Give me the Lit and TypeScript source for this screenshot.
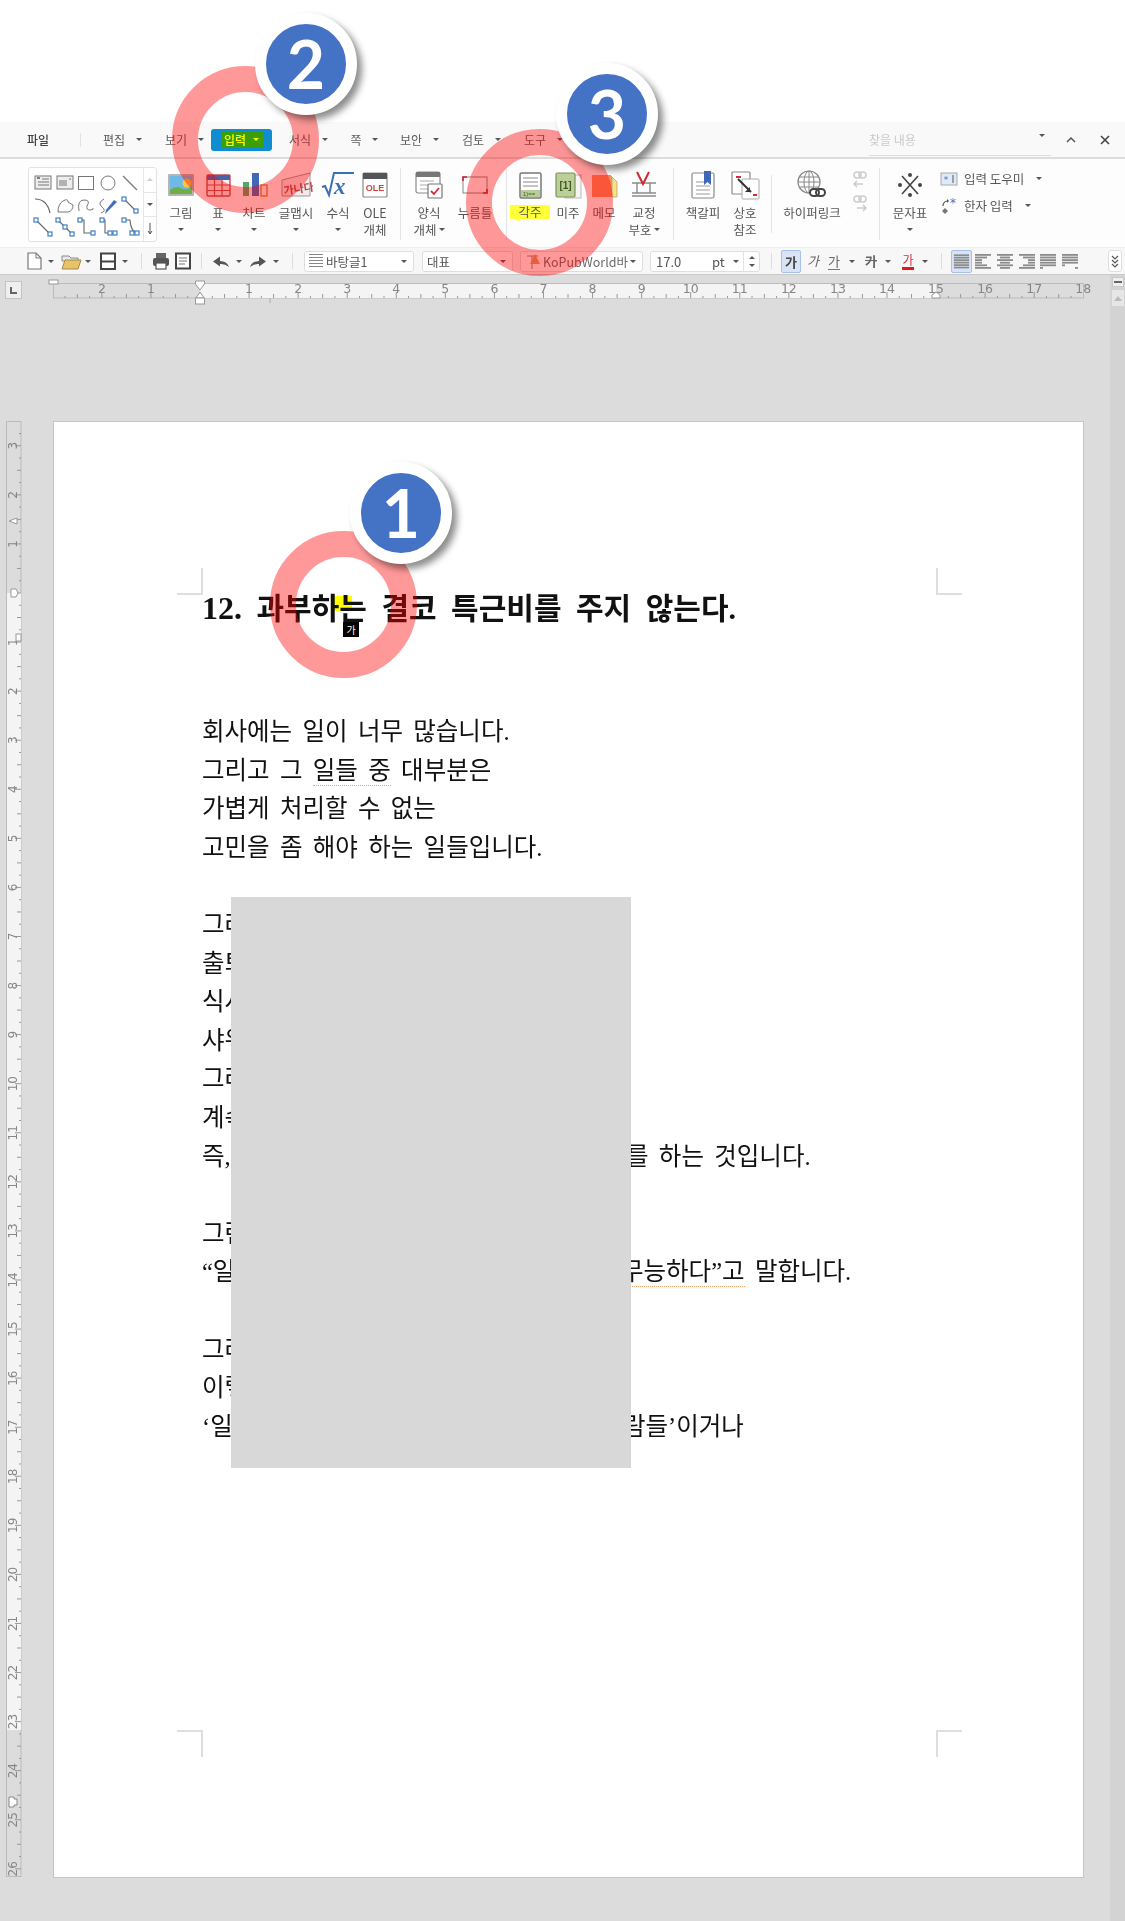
import { LitElement, html, css, svg } from "lit";
import { customElement } from "lit/decorators.js";

type Item = { x: number; w: number; c: unknown };
const place = (items: Item[], start = 0) => {
  let r = start;
  return items.map((it) => {
    const ml = it.x - r;
    r = it.x + it.w;
    return html`<div class="cell" style="margin-left:${ml}px;width:${it.w}px">${it.c}</div>`;
  });
};
const caret = html`<i class="caret"></i>`;
const ico = (w: number, h: number, body: unknown) =>
  html`<svg width=${w} height=${h} viewBox="0 0 ${w} ${h}" fill="none">${body}</svg>`;

/* ---------- ribbon icons ---------- */
const icons: Record<string, unknown> = {
  pic: ico(32, 30, svg`<rect x="3" y="4" width="26" height="22" rx="1" fill="#b5b5b5"/><rect x="5" y="6" width="22" height="18" fill="#6fb9e6"/><path d="M5 20q6-5 11-2t11-1v7H5z" fill="#6fae46"/><circle cx="22" cy="13" r="4.5" fill="#f4c842"/>`),
  table: ico(32, 30, svg`<rect x="5" y="5" width="23" height="21" rx="1" stroke="#c0504d" stroke-width="1.4" fill="#fbeeee"/><rect x="5" y="5" width="23" height="5" fill="#4a63a8"/><path d="M5 15h23M5 20.500h23M12.500 10v16M20 10v16" stroke="#c0504d" stroke-width="1.2"/>`),
  chart: ico(32, 30, svg`<rect x="5" y="12" width="6" height="14" fill="#56a56b"/><rect x="14" y="3" width="7" height="23" fill="#3f68b5"/><rect x="23" y="15" width="6" height="11" fill="none" stroke="#d8883a" stroke-width="1.4"/>`),
  art: ico(34, 30, svg`<path d="M3 10L31 3v23H3z" fill="#f3e9e9" stroke="#999" stroke-width="1"/><text x="4" y="23" font-size="11" font-weight="700" fill="#b3484a" transform="rotate(-8 17 15)" font-family="'Noto Sans CJK KR',sans-serif">가나다</text>`),
  math: ico(34, 30, svg`<path d="M1 17l3-1 4 9 5-22h20" stroke="#3b6fb8" stroke-width="2"/><text x="13" y="24" font-size="23" font-style="italic" font-weight="700" fill="#3b6fb8" font-family="'Liberation Serif',serif">x</text>`),
  ole: ico(30, 30, svg`<rect x="3" y="3" width="24" height="24" rx="1" fill="#fff" stroke="#8a8a8a" stroke-width="1.2"/><rect x="3" y="3" width="24" height="6" fill="#555"/><text x="15" y="21" text-anchor="middle" font-size="9" font-weight="700" fill="#d9423f" font-family="'Liberation Sans',sans-serif">OLE</text>`),
  form: ico(32, 30, svg`<rect x="3" y="2" width="24" height="21" rx="2" fill="#fff" stroke="#8a8a8a" stroke-width="1.2"/><rect x="3" y="2" width="24" height="5" fill="#777"/><path d="M7 11h14M7 15h10M7 19h8" stroke="#aaa"/><rect x="15" y="14" width="14" height="14" rx="1" fill="#fff" stroke="#777" stroke-width="1.2"/><path d="M18 21l3 3 5-6" stroke="#d22f3a" stroke-width="1.8"/>`),
  field: ico(32, 30, svg`<rect x="4" y="7" width="24" height="16" stroke="#999" stroke-width="1.2"/><path d="M4 11V7h4M24 23h4v-4" stroke="#c8222a" stroke-width="1.6"/>`),
  foot: ico(30, 30, svg`<rect x="5" y="3" width="21" height="25" rx="1.500" fill="#fff" stroke="#777" stroke-width="1.500"/><path d="M8 8h15M8 12h15M8 16h15" stroke="#888"/><rect x="6" y="20" width="19" height="7" fill="#b7cc96"/><text x="8" y="26" font-size="6" fill="#44602a" font-family="'Liberation Sans',sans-serif">1)==</text>`),
  end: ico(30, 30, svg`<rect x="12" y="5" width="16" height="23" fill="#f4f4f4" stroke="#bbb"/><rect x="3" y="3" width="19" height="24" rx="1.500" fill="#bccf9b" stroke="#789455" stroke-width="1.200"/><text x="12.500" y="19" text-anchor="middle" font-size="10" font-weight="700" fill="#3e5b22" font-family="'Liberation Sans',sans-serif">[1]</text>`),
  memo: ico(30, 30, svg`<path d="M3 5h18l7 7v15H3z" fill="#f68f61"/><path d="M21 5l7 7v15h-5V8z" fill="#f6e08c" stroke="#bfa55a" stroke-width=".8"/>`),
  proof: ico(32, 30, svg`<path d="M4 13h24M4 26h24M4 23h24M9 13v10M22 13v10" stroke="#8a8a8a" stroke-width="1.400"/><path d="M9 2l6 12 6-12" stroke="#d0272f" stroke-width="2"/>`),
  book: ico(30, 30, svg`<rect x="4" y="3" width="22" height="25" rx="1.500" fill="#fff" stroke="#8a8a8a" stroke-width="1.200"/><path d="M8 12h10M8 16h14M8 20h14M8 24h14" stroke="#999"/><path d="M16 1h7v14l-3.500-3-3.500 3z" fill="#3f68b5"/>`),
  xref: ico(32, 30, svg`<rect x="3" y="2" width="18" height="22" rx="1" fill="#fff" stroke="#8a8a8a" stroke-width="1.200"/><rect x="13" y="9" width="17" height="20" rx="1" fill="#fff" stroke="#aaa" stroke-width="1"/><path d="M7 7h5M24 25h4" stroke="#d22f3a" stroke-width="2"/><path d="M9 9l13 13" stroke="#333" stroke-width="2"/><path d="M21 17v5h-5z" fill="#333"/>`),
  link: ico(34, 32, svg`<circle cx="14" cy="13" r="11" stroke="#888" stroke-width="1.200"/><ellipse cx="14" cy="13" rx="5" ry="11" stroke="#888"/><path d="M14 2v22M4 8h20M3 13h22M4 18h20" stroke="#888"/><rect x="15" y="20" width="9" height="7" rx="3.500" stroke="#444" stroke-width="2" fill="#fff"/><rect x="21" y="20" width="9" height="7" rx="3.500" stroke="#444" stroke-width="2"/>`),
  sym: ico(30, 30, svg`<path d="M7 6l16 18M23 6L7 24" stroke="#444" stroke-width="1.600"/><circle cx="15" cy="5" r="2" fill="#444"/><circle cx="15" cy="25" r="2" fill="#444"/><circle cx="5" cy="15" r="2" fill="#444"/><circle cx="25" cy="15" r="2" fill="#444"/>`),
};

type Btn = { x: number; w: number; i?: string; a?: string; b?: string; cl?: boolean; cb?: boolean; hy?: boolean };
const ribbon: Btn[] = [
  { x: 161, w: 40, i: "pic", a: "그림", cl: true },
  { x: 200, w: 36, i: "table", a: "표", cl: true },
  { x: 236, w: 36, i: "chart", a: "차트", cl: true },
  { x: 272, w: 48, i: "art", a: "글맵시", cl: true },
  { x: 320, w: 36, i: "math", a: "수식", cl: true },
  { x: 356, w: 38, i: "ole", a: "OLE", b: "개체" },
  { x: 406, w: 46, i: "form", a: "양식", b: "개체", cb: true },
  { x: 452, w: 46, i: "field", a: "누름틀" },
  { x: 514, w: 32, i: "foot", a: "각주", hy: true },
  { x: 546, w: 44, i: "end", a: "미주" },
  { x: 590, w: 28, i: "memo", a: "메모" },
  { x: 618, w: 52, i: "proof", a: "교정", b: "부호", cb: true },
  { x: 676, w: 54, i: "book", a: "책갈피" },
  { x: 730, w: 30, i: "xref", a: "상호", b: "참조" },
  { x: 782, w: 60, i: "link", a: "하이퍼링크" },
  { x: 880, w: 60, i: "sym", a: "문자표", cl: true },
];

const conn = (d: string, pts: number[][]) =>
  ico(20, 20, svg`<path d=${d} stroke="#666" stroke-width="1.100"/>${pts.map((p) => svg`<rect x=${p[0] - 2} y=${p[1] - 2} width="4" height="4" fill="#fff" stroke="#3f7fc4" stroke-width="1.200"/>`)}`);
const gallery = [
  ico(20, 20, svg`<rect x="2" y="3" width="16" height="13" fill="#eee" stroke="#777"/><path d="M9 6h7M5 9h11M5 12h11" stroke="#777"/><path d="M4 5h3" stroke="#555" stroke-width="1.500"/>`),
  ico(20, 20, svg`<rect x="2" y="3" width="16" height="13" fill="#eee" stroke="#777"/><path d="M5 7v6M7 7v6M9 7v6M11 7v6M14 6h2" stroke="#777"/>`),
  ico(20, 20, svg`<rect x="2.500" y="3.500" width="15" height="13" stroke="#777"/>`),
  ico(20, 20, svg`<circle cx="10" cy="10" r="7" stroke="#777"/>`),
  ico(20, 20, svg`<path d="M3 3l14 14" stroke="#777" stroke-width="1.200"/>`),
  ico(20, 20, svg`<path d="M2 4q12 0 15 14" stroke="#666" stroke-width="1.200"/>`),
  ico(20, 20, svg`<path d="M3 17q0-8 5-11 5-3 5 1l5 3q0 6-5 7z" stroke="#777"/>`),
  ico(20, 20, svg`<path d="M3 16q-2-11 5-11t3 6q-1 4 3 4t3-2" stroke="#777"/>`),
  ico(20, 20, svg`<path d="M3 18q6-2 1-6t2-8" stroke="#777"/><path d="M9 17l-2 2 1-4L16 5l3 2z" fill="#3f6fc0"/>`),
  conn("M4 4l12 12", [[4, 4], [16, 16]]),
  conn("M3 3l14 14", [[3, 3], [17, 17]]),
  conn("M3 3l14 14", [[3, 3], [10, 10], [17, 17]]),
  conn("M4 3h4v13h9", [[4, 3], [17, 16]]),
  conn("M4 3h3v13h10", [[4, 3], [12, 16], [17, 16]]),
  conn("M4 3h6q1 13 8 13", [[4, 3], [12, 16], [17, 16]]),
];

const alignIcon = (kind: string) => {
  const l: Record<string, number[][]> = {
    j: [[2, 18], [2, 18], [2, 18], [2, 18], [2, 18], [2, 18]],
    l: [[2, 18], [2, 14], [2, 9], [2, 9], [2, 14], [2, 18]],
    c: [[2, 18], [5, 15], [2, 18], [5, 15], [2, 18], [5, 15]],
    r: [[2, 18], [6, 18], [11, 18], [11, 18], [6, 18], [2, 18]],
    d: [[2, 18], [2, 18], [2, 18], [2, 18], [2, 18], [2, 5]],
    e: [[2, 18], [2, 18], [2, 18], [2, 18], [2, 5], [15, 18]],
  };
  return ico(20, 18, svg`${l[kind].map((p, i) => svg`<rect x=${p[0]} y=${2 + i * 2.600} width=${p[1] - p[0]} height="1.800" fill="#8b8b8b"/>`)}`);
};

const toolbar: Item[] = [
  { x: 25, w: 18, c: ico(18, 20, svg`<path d="M3 2h8l5 5v11H3z" fill="#fff" stroke="#777" stroke-width="1.200"/><path d="M11 2v5h5" stroke="#777"/>`) },
  { x: 47, w: 8, c: caret },
  { x: 60, w: 22, c: ico(22, 20, svg`<path d="M2 5h7l2 2h7v3H2z" fill="#e8e8e8" stroke="#888"/><path d="M2 18l3-9h16l-3 9z" fill="#e9c368" stroke="#a58a45"/>`) },
  { x: 84, w: 8, c: caret },
  { x: 98, w: 20, c: ico(20, 20, svg`<rect x="3" y="2.500" width="14" height="15.500" fill="#fff" stroke="#444" stroke-width="2"/><path d="M3 10.500h14" stroke="#444" stroke-width="2"/>`) },
  { x: 121, w: 8, c: caret },
  { x: 141, w: 1, c: html`<i class="tsep"></i>` },
  { x: 151, w: 20, c: ico(20, 20, svg`<rect x="5" y="2" width="10" height="6" fill="#666"/><rect x="2" y="7" width="16" height="8" rx="2" fill="#555"/><rect x="5" y="12" width="10" height="6" fill="#fff" stroke="#555" stroke-width="1.200"/>`) },
  { x: 174, w: 18, c: ico(18, 20, svg`<rect x="2" y="2.500" width="14" height="15" fill="#fff" stroke="#444" stroke-width="2"/><path d="M5 7h8M5 10h8M5 13h6" stroke="#777"/>`) },
  { x: 201, w: 1, c: html`<i class="tsep"></i>` },
  { x: 212, w: 18, c: ico(18, 16, svg`<path d="M17 14q-2-6-9-6V3.500L1 8.500l7 5V11q5-.5 9 3z" fill="#555"/>`) },
  { x: 235, w: 8, c: caret },
  { x: 249, w: 18, c: ico(18, 16, svg`<path d="M1 14q2-6 9-6V3.500l7 5-7 5V11q-5-.5-9 3z" fill="#555"/>`) },
  { x: 272, w: 8, c: caret },
  { x: 292, w: 1, c: html`<i class="tsep"></i>` },
  { x: 304, w: 110, c: html`<div class="combo"><span class="lines"></span><span class="ct">바탕글1</span>${caret}</div>` },
  { x: 422, w: 91, c: html`<div class="combo"><span class="ct">대표</span>${caret}</div>` },
  { x: 520, w: 123, c: html`<div class="combo">${ico(18, 18, svg`<path d="M2 4h11M7 4v13" stroke="#888"/><path d="M10 2l5 10H5z" fill="#e09a5c"/>`)}<span class="ct latin">KoPubWorld바</span>${caret}</div>` },
  { x: 650, w: 110, c: html`<div class="combo"><span class="ct num">17.0</span><span class="ct pt">pt</span>${caret}<span class="spin"><i class="up"></i><i class="caret"></i></span></div>` },
  { x: 771, w: 1, c: html`<i class="tsep"></i>` },
  { x: 781, w: 20, c: html`<div class="on"><b>가</b></div>` },
  { x: 805, w: 16, c: html`<span class="ga it">가</span>` },
  { x: 826, w: 16, c: html`<span class="ga un">가</span>` },
  { x: 848, w: 8, c: caret },
  { x: 863, w: 16, c: html`<span class="ga st">가</span>` },
  { x: 884, w: 8, c: caret },
  { x: 900, w: 16, c: html`<span class="ga red">가</span>` },
  { x: 921, w: 8, c: caret },
  { x: 941, w: 1, c: html`<i class="tsep"></i>` },
  { x: 951, w: 21, c: html`<div class="on">${alignIcon("j")}</div>` },
  { x: 973, w: 20, c: alignIcon("l") },
  { x: 995, w: 20, c: alignIcon("c") },
  { x: 1017, w: 20, c: alignIcon("r") },
  { x: 1038, w: 20, c: alignIcon("d") },
  { x: 1060, w: 20, c: alignIcon("e") },
  { x: 1108, w: 14, c: html`<div class="more">${ico(10, 14, svg`<path d="M2 2l3 3 3-3M2 6l3 3 3-3M2 10l3 3 3-3" stroke="#555" stroke-width="1.200"/>`)}</div>` },
];

const menuLabels: [string, number, number][] = [
  ["편집", 114, 139], ["보기", 176, 201], ["서식", 300, 325], ["쪽", 356, 375],
  ["보안", 411, 436], ["검토", 473, 498], ["도구", 535, 560],
];
const menuAll: Item[] = [
  { x: 20, w: 36, c: html`<span class="mi strong">파일</span>` },
  { x: 80, w: 1, c: html`<i class="msep"></i>` },
  { x: 211, w: 61, c: html`<div class="mact"><span class="hl">입력<i class="caret yl"></i></span></div>` },
  ...menuLabels.flatMap(([t, c, k]) => [
    { x: c - 15, w: 30, c: html`<span class="mi">${t}</span>` },
    { x: k - 4, w: 8, c: caret },
  ] as Item[]),
].sort((a, b) => a.x - b.x);

/* ---------- rulers ---------- */
const U = 49.07;
const hRuler = () => {
  const O = 147;
  const ticks = [];
  for (let i = -12; i <= 72; i++) {
    const x = O + (i * U) / 4;
    if (x < 0 || x > 1030) continue;
    const h = i % 4 === 0 ? 6 : i % 2 === 0 ? 4 : 2;
    ticks.push(svg`<path d="M${x} 15v-${h}" stroke="#999"/>`);
  }
  const nums = [-2, -1, ...Array.from({ length: 18 }, (_, i) => i + 1)];
  return html`<svg class="hr" width="1031" height="15" viewBox="0 0 1031 15">
    <rect x=".5" y=".5" width="1030" height="14.500" fill="#dcdcdc" stroke="#bbb"/>
    <rect x="147" y="1" width="736" height="14" fill="#f4f4f4"/>
    ${ticks}
    ${nums.map((n) => svg`<text x=${O + n * U} y="10" text-anchor="middle" font-size="12.500" fill="#868686" font-family="'DejaVu Sans',sans-serif">${Math.abs(n)}</text>`)}
    <rect x="-4" y="-3" width="9" height="4" fill="#fff" stroke="#999"/>
    <path d="M142.500-2h9v3l-4.500 6-4.500-6z" fill="#fff" stroke="#999"/>
    <path d="M147 9l4 6h-8z" fill="#fff" stroke="#999"/>
    <rect x="142.500" y="15" width="9" height="6" fill="#fff" stroke="#999"/>
    <path d="M883 9l4 3v3h-8v-3z" fill="#fff" stroke="#999"/>
    <path d="M217 15v5" stroke="#aaa"/>
  </svg>`;
};
const vRuler = () => {
  const O = 172;
  const ticks = [];
  for (let i = -13; i <= 105; i++) {
    const y = O + (i * U) / 4;
    if (y < 0 || y > 1455) continue;
    const h = i % 4 === 0 ? 6 : i % 2 === 0 ? 4 : 2;
    ticks.push(svg`<path d="M15 ${y}h-${h}" stroke="#999"/>`);
  }
  const nums = [-3, -2, -1, ...Array.from({ length: 26 }, (_, i) => i + 1)];
  return html`<svg class="vr" width="15" height="1456" viewBox="0 0 15 1456">
    <rect x=".5" y=".5" width="14.500" height="1455" fill="#dcdcdc" stroke="#bbb"/>
    <rect x="1" y="172" width="14" height="1137" fill="#f4f4f4"/>
    ${ticks}
    ${nums.map((n) => {
      const y = O + n * U;
      return svg`<text x="7" y=${y} transform="rotate(-90 7 ${y})" dy="4" text-anchor="middle" font-size="12" fill="#868686" font-family="'DejaVu Sans',sans-serif">${Math.abs(n)}</text>`;
    })}
    <path d="M3 100l8-3v6z" fill="#fff" stroke="#999"/>
    <path d="M5 168h5l2 4-2 4H5z" fill="#fff" stroke="#999"/>
    <rect x="10" y="213" width="5" height="7" fill="#fff" stroke="#999"/>
    <path d="M3 1376h5v2h3v6H8v2H3z" fill="#fff" stroke="#888"/>
  </svg>`;
};

type Line = { l: unknown; r?: unknown; s?: number };
const paras: Line[][] = [
  [
    { l: "회사에는 일이 너무 많습니다." },
    { l: html`그리고 그 <span class="sq">일들 중</span> 대부분은` },
    { l: "가볍게 처리할 수 없는" },
    { l: "고민을 좀 해야 하는 일들입니다." },
  ],
  [
    { l: "그러" }, { l: "출퇴" }, { l: "식사" }, { l: "샤워" }, { l: "그러" }, { l: "계속" },
    { l: "즉,", r: "를 하는 것입니다.", s: -5 },
  ],
  [
    { l: "그런" },
    { l: "“일", r: html`<span class="sq">무능하다”고</span> 말합니다.`, s: -10 },
  ],
  [
    { l: "그러" }, { l: "이렇" },
    { l: "‘일", r: "람들’이거나", s: -8 },
  ],
];

@customElement("app-root")
export class AppRoot extends LitElement {
  static styles = css`
    :host { display: block; position: relative; width: 1125px; height: 1921px; overflow: hidden; background: #fff;
      font-family: "Noto Sans CJK KR", "Liberation Sans", sans-serif; color: #555; }
    .top { height: 122px; background: #fff; }
    .cell { flex: none; display: flex; align-items: center; justify-content: center; }
    .caret { display: inline-block; width: 0; height: 0; border: 3px solid transparent; border-top: 3.5px solid #555; border-bottom: 0; flex: none; }
    .menu, .ribbon, .tools, .hr, .vr, h1, .para { filter: blur(.35px); }
    .menu { display: flex; align-items: center; height: 35px; background: #f9f9f9; border-bottom: 2px solid #dcdcdc; position: relative; box-sizing: content-box; font-size: 12px; }
    .mi { white-space: nowrap; color: #5c5c5c; }
    .strong { color: #444; font-weight: 500; }
    .msep { display: block; width: 1px; height: 14px; background: #e2e2e2; }
    .mact { width: 100%; height: 22px; background: #0f8dd0; border-radius: 3px; display: flex; align-items: center; justify-content: center; }
    .hl { background: #3a9f08; color: #ff0; display: flex; align-items: center; gap: 7px; width: 42px; height: 15px; line-height: 15px; justify-content: center; font-size: 12px; font-weight: 500; }
    .yl { border-top-color: #ff0; }
    .find { position: absolute; left: 869px; top: 0; width: 182px; height: 33px; border-bottom: 1px solid #ddd; color: #c9c9c9; line-height: 35px; font-size: 12px; }
    .find .caret { position: absolute; right: 6px; top: 12px; }
    .mctl { position: absolute; top: 8px; }
    .ribbon { display: flex; height: 89px; background: #fdfdfd; border-bottom: 1px solid #eee; box-sizing: border-box; align-items: flex-start; }
    .gal { flex: none; width: 129px; height: 75px; margin: 8px 0 0 28px; border: 1px solid #e2e2e2; border-radius: 3px; box-sizing: border-box; display: flex; background: #fff; }
    .galgrid { width: 114px; padding: 4px 0 0 3px; box-sizing: border-box; display: grid; grid-template-columns: repeat(5, 21.7px); grid-auto-rows: 22px; justify-items: center; align-items: center; }
    .galside { flex: 1; border-left: 1px solid #e6e6e6; display: flex; flex-direction: column; }
    .galside div { flex: 1; display: flex; align-items: center; justify-content: center; }
    .galside div + div { border-top: 1px solid #e6e6e6; }
    .btn { flex: none; display: flex; flex-direction: column; align-items: center; padding-top: 11px; font-size: 12.500px; color: #555; }
    .btn .ic { height: 30px; display: flex; align-items: center; justify-content: center; }
    .btn .ln { height: 16.500px; line-height: 16.500px; white-space: nowrap; display: flex; align-items: center; gap: 2px; }
    .btn .ic + .ln { margin-top: 5px; }
    .btn .car { height: 16.500px; display: flex; align-items: center; }
    .btn .hy { position: relative; width: 40px; height: 14px; line-height: 14px; text-align: center; background: #ffff3a; flex: none; display: block; }
    .btn .hy::after { content: ""; position: absolute; left: 8px; top: 14px; width: 1px; height: 2px; background: #ffff3a; }
    .rsep { flex: none; display: flex; justify-content: center; }
    .rsep i { display: block; width: 1px; background: #e4e4e4; margin-top: 9px; height: 72px; }
    .rsep i.sh { margin-top: 16px; height: 58px; }
    .smalls { flex: none; width: 36px; display: flex; flex-direction: column; align-items: center; padding-top: 12px; gap: 4px; }
    .side { flex: none; padding-top: 8px; display: flex; flex-direction: column; gap: 4px; font-size: 12.500px; margin-left: 0; }
    .side div { display: flex; align-items: center; height: 23px; white-space: nowrap; }
    .side svg { margin-right: 6px; }
    .side .caret { margin-left: 12px; }
    .tools { display: flex; align-items: center; height: 27px; background: #f7f7f7; border-bottom: 1px solid #c9c9c9; box-sizing: border-box; font-size: 12.500px; }
    .tsep { display: block; width: 1px; height: 16px; background: #ddd; }
    .combo { width: 100%; height: 21px; box-sizing: border-box; background: #fff; border: 1px solid #dedede; border-radius: 3px; display: flex; align-items: center; padding: 0 6px 0 4px; position: relative; }
    .combo > .caret { position: absolute; right: 6px; top: 8px; }
    .lines { width: 14px; height: 14px; margin-right: 3px; background: repeating-linear-gradient(#888 0 1.500px, transparent 1.500px 3px); }
    .ct { white-space: nowrap; color: #555; }
    .latin { font-size: 12.500px; color: #6a6a6a; }
    .num { font-size: 13px; margin-left: 1px; }
    .pt { position: absolute; left: 61px; font-size: 13px; }
    .combo:has(.spin) > .caret { right: 20px; }
    .spin { position: absolute; right: 0; top: 0; bottom: 0; width: 15px; border-left: 1px solid #e2e2e2; display: flex; flex-direction: column; align-items: center; justify-content: center; gap: 5px; }
    .up { display: block; width: 0; height: 0; border: 3px solid transparent; border-bottom: 3.500px solid #555; border-top: 0; }
    .on { width: 100%; height: 23px; background: #d8e3f6; border: 1px solid #a9c0ea; border-radius: 2px; box-sizing: border-box; display: flex; align-items: center; justify-content: center; font-size: 13px; color: #444; }
    .ga { font-size: 13px; color: #666; line-height: 16px; }
    .it { font-style: italic; }
    .un { border-bottom: 1px solid #777; }
    .st { text-decoration: line-through; font-weight: 700; }
    .red { color: #d0343a; border-bottom: 3px solid #e8141c; line-height: 14px; font-size: 12px; }
    .more { width: 100%; height: 22px; background: #fff; border: 1px solid #dedede; border-radius: 3px; box-sizing: border-box; display: flex; align-items: center; justify-content: center; }
    .work { display: flex; height: 1646px; background: #dcdcdc; }
    .main { width: 1110px; flex: none; }
    .rrow { display: flex; align-items: flex-start; height: 146px; }
    .corner { flex: none; width: 17px; height: 18px; margin: 6px 0 0 5px; background: #efefef; border: 1px solid #c4c4c4; box-sizing: border-box; position: relative; }
    .corner::after { content: ""; position: absolute; left: 4px; top: 5px; width: 5px; height: 5px; border-left: 2px solid #666; border-bottom: 2px solid #666; }
    .hr { flex: none; margin: 8px 0 0 31px; overflow: visible; display: block; }
    .drow { display: flex; align-items: flex-start; }
    .vr { flex: none; margin-left: 6px; overflow: visible; display: block; }
    .page { flex: none; margin-left: 32px; width: 1031px; height: 1457px; box-sizing: border-box; background: #fff; border: 1.500px solid #c6c6c6; padding: 166px 0 0 148px; position: relative; color: #111; font-family: "Liberation Serif", "Noto Sans CJK KR", serif; }
    .mark { position: absolute; width: 24px; height: 25px; border: 0 solid #dedede; }
    .tl { left: 123px; top: 146px; border-width: 0 2px 2px 0; }
    .tr { left: 882px; top: 146px; border-width: 0 0 2px 2px; }
    .bl { left: 123px; top: 1308px; border-width: 2px 2px 0 0; }
    .br { left: 882px; top: 1308px; border-width: 2px 0 0 2px; }
    h1 { margin: 0 0 85px; height: 40px; line-height: 40px; font-size: 30px; font-weight: 700; word-spacing: 7px; white-space: nowrap; position: relative; }
    h1 .n { font-size: 32px; }
    h1 .y { position: absolute; left: 129px; top: 8px; width: 21px; height: 15px; background: #ff0; z-index: 0; }
    h1 span { position: relative; z-index: 1; }
    .para { margin-bottom: 38.600px; font-size: 24.500px; word-spacing: 4.200px; }
    .ln { display: grid; grid-template-columns: 429px 1fr; height: 38.600px; line-height: 38.600px; white-space: nowrap; }
    .ln .l { grid-column: 1; }
    .ln .r { grid-column: 2; }
    .sq { border-bottom: 1.500px dotted #f0a86e; padding-bottom: 1px; }
    .redact { position: absolute; left: 231px; top: 897px; width: 400px; height: 571px; background: #d8d8d8; z-index: 3; }
    .cursor { position: absolute; left: 343px; top: 622px; width: 16px; height: 15px; background: #000; color: #fff; font-size: 10px; line-height: 15px; text-align: center; z-index: 4; }
    .ring { position: absolute; width: 147px; height: 147px; box-sizing: border-box; border: 26px solid rgba(255, 0, 0, .4); border-radius: 50%; z-index: 5; }
    .badge { position: absolute; width: 102px; height: 102px; box-sizing: border-box; border: 11px solid #fff; border-radius: 50%; background: #4472c4; color: #fff; z-index: 6;
      box-shadow: 5px 5px 7px rgba(0, 0, 0, .45); display: flex; align-items: center; justify-content: center; font-family: "Lato", "Noto Sans", sans-serif; font-weight: 700; font-size: 66px; line-height: 1; }
    .sb { flex: 1; background: #d3d3d3; display: flex; flex-direction: column; align-items: center; padding-top: 2px; gap: 3px; }
    .sb .mn { width: 12px; height: 10px; background: #efefef; border: 1px solid #c8c8c8; box-sizing: border-box; display: flex; align-items: center; justify-content: center; }
    .sb .mn i { display: block; width: 8px; height: 2px; background: #666; }
    .sb .upb { width: 12px; height: 16px; background: #e6e6e6; display: flex; align-items: center; justify-content: center; }
    .sb .upb i { display: block; border: 4px solid transparent; border-bottom: 5px solid #bbb; border-top: 0; }
  `;

  private renderRibbon() {
    const seq: unknown[] = [];
    let r = 157;
    const sep = (x: number, w: number, sh = false) => {
      seq.push(html`<div class="rsep" style="margin-left:${x - r}px;width:${w}px"><i class=${sh ? "sh" : ""}></i></div>`);
      r = x + w;
    };
    const btn = (b: Btn) => {
      seq.push(html`<div class="btn" style="margin-left:${b.x - r}px;width:${b.w}px">
        <div class="ic">${icons[b.i!]}</div>
        ${b.hy ? html`<div class="ln hy">${b.a}</div>` : html`<div class="ln">${b.a}</div>`}
        ${b.b ? html`<div class="ln">${b.b}${b.cb ? caret : ""}</div>` : b.cl ? html`<div class="car">${caret}</div>` : ""}
      </div>`);
      r = b.x + b.w;
    };
    ribbon.forEach((b) => {
      if (b.x === 406) sep(394, 12);
      if (b.x === 514) sep(498, 16);
      if (b.x === 676) sep(670, 6);
      if (b.x === 782) sep(760, 22, true);
      if (b.x === 880) {
        seq.push(html`<div class="smalls" style="margin-left:${842 - r}px">
          ${ico(22, 20, svg`<rect x="5" y="1" width="7" height="6" rx="3" stroke="#ccc" stroke-width="1.500"/><rect x="10" y="1" width="7" height="6" rx="3" stroke="#ccc" stroke-width="1.500"/><path d="M14 13H5m3-3l-3 3 3 3" stroke="#ccc" stroke-width="1.500"/>`)}
          ${ico(22, 20, svg`<rect x="5" y="1" width="7" height="6" rx="3" stroke="#ccc" stroke-width="1.500"/><rect x="10" y="1" width="7" height="6" rx="3" stroke="#ccc" stroke-width="1.500"/><path d="M8 13h9m-3-3l3 3-3 3" stroke="#ccc" stroke-width="1.500"/>`)}
        </div>`);
        r = 878;
        sep(878, 2);
      }
      btn(b);
    });
    return seq;
  }

  render() {
    return html`
      <div class="top"></div>
      <div class="menu">
        ${place(menuAll)}
        <div class="find">찾을 내용${caret}</div>
        <div class="mctl" style="left:1065px">${ico(12, 20, svg`<path d="M2 12l4-4 4 4" stroke="#555" stroke-width="1.500"/>`)}</div>
        <div class="mctl" style="left:1099px">${ico(12, 20, svg`<path d="M2 6l8 8M10 6l-8 8" stroke="#444" stroke-width="1.600"/>`)}</div>
      </div>
      <div class="ribbon">
        <div class="gal">
          <div class="galgrid">${gallery}</div>
          <div class="galside">
            <div><i class="up" style="border-bottom-color:#ccc"></i></div>
            <div>${caret}</div>
            <div>${ico(8, 14, svg`<path d="M4 1v11M2 9l2 3 2-3" stroke="#555"/>`)}</div>
          </div>
        </div>
        ${this.renderRibbon()}
        <div class="side">
          <div>${ico(18, 14, svg`<rect x="1" y="1" width="16" height="12" fill="#dfe9f7" stroke="#aaa"/><text x="6" y="11" text-anchor="middle" font-size="9" fill="#3f6fc0" font-family="'DejaVu Sans',sans-serif">*</text><path d="M13 3v8" stroke="#555"/>`)}입력 도우미<i class="caret"></i></div>
          <div>${ico(18, 18, svg`<path d="M3 9q0-4 4-5" stroke="#555" stroke-width="1.200"/><path d="M7 2l2 2-2 2z" fill="#555"/><path d="M5 11l3 3-3 3-3-3z" fill="#777"/><text x="13" y="10" text-anchor="middle" font-size="12" fill="#3f6fc0" font-family="'DejaVu Sans',sans-serif">*</text>`)}한자 입력<i class="caret"></i></div>
        </div>
      </div>
      <div class="tools">${place(toolbar)}</div>
      <div class="work">
        <div class="main">
          <div class="rrow"><div class="corner"></div>${hRuler()}</div>
          <div class="drow">
            ${vRuler()}
            <div class="page">
              <i class="mark tl"></i><i class="mark tr"></i><i class="mark bl"></i><i class="mark br"></i>
              <h1><i class="y"></i><span><span class="n">12.</span> 과부하는 결코 특근비를 주지 않는다.</span></h1>
              ${paras.map((p) => html`<div class="para">${p.map((l) => html`<div class="ln"><span class="l">${l.l}</span>${l.r ? html`<span class="r" style="margin-left:${l.s}px">${l.r}</span>` : ""}</div>`)}</div>`)}
            </div>
          </div>
        </div>
        <div class="sb"><div class="mn"><i></i></div><div class="upb"><i></i></div></div>
      </div>
      <div class="redact"></div>
      <div class="cursor">가</div>
      <div class="ring" style="left:270px;top:531px"></div>
      <div class="ring" style="left:172px;top:66px"></div>
      <div class="ring" style="left:466px;top:129px"></div>
      <div class="badge" style="left:350px;top:462px">1</div>
      <div class="badge" style="left:255px;top:13px">2</div>
      <div class="badge" style="left:556px;top:63px">3</div>
    `;
  }
}
